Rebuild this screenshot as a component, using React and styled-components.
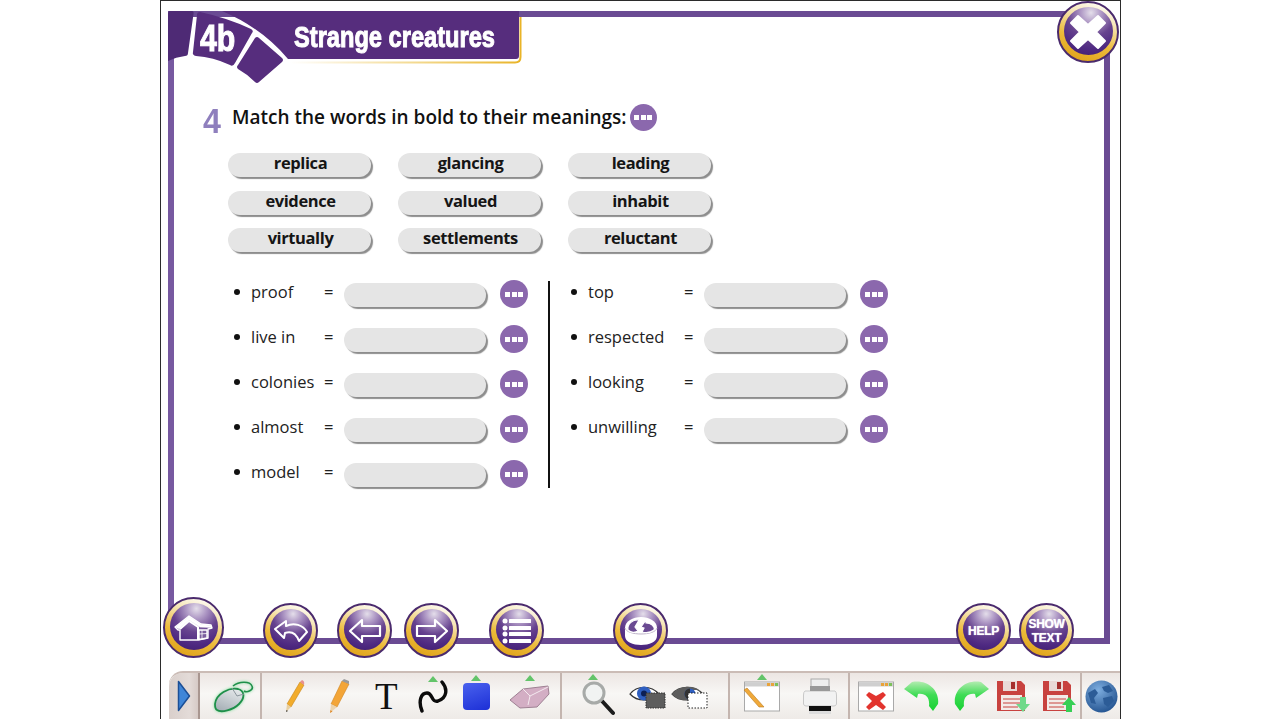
import React from 'react';
import styled, { createGlobalStyle } from 'styled-components';

const GlobalStyle = createGlobalStyle`
	html, body {
		margin: 0;
		padding: 0;
		background: #fff;
		overflow: hidden;
	}
	body {
		font-family: 'Open Sans', 'Liberation Sans', sans-serif;
	}
`;

const Stage = styled.div`
	position: relative;
	box-sizing: border-box;
	width: 961px;
	height: 719px;
	margin-left: 160px;
	border: 1px solid #2b2b2b;
	border-bottom: none;
	background: #fff;
	overflow: hidden;
`;

const Frame = styled.main`
	box-sizing: border-box;
	width: 942px;
	height: 633px;
	margin: 10px 0 0 7px;
	padding: 85px 0 0 29px;
	border: 6px solid #6a4b93;
	border-left-color: #7759a0;
`;

const BannerWrap = styled.header`
	position: absolute;
	left: 7px;
	top: 10px;
	width: 356px;
	height: 76px;

	svg {
		display: block;
	}
`;

const Lesson = styled.span`
	position: absolute;
	left: 32px;
	top: 6px;
	font: bold 37px/44px 'Liberation Sans', sans-serif;
	color: #fff;
	transform: scaleX(0.82);
	transform-origin: left center;
	-webkit-text-stroke: 1px #fff;
`;

const Title = styled.h1`
	position: absolute;
	left: 126px;
	top: 8px;
	margin: 0;
	font: bold 29px/36px 'Liberation Sans', sans-serif;
	color: #fff;
	white-space: nowrap;
	transform: scaleX(0.815);
	transform-origin: left center;
	-webkit-text-stroke: 1px #fff;
`;

const Heading = styled.div`
	display: flex;
	align-items: center;
	height: 30px;
`;

const Numeral = styled.span`
	width: 29px;
	font: bold 35px/30px 'Liberation Sans', sans-serif;
	color: #8f7fbd;
	transform: scaleX(0.92);
	transform-origin: left center;
	margin-top: 8px;
`;

const Prompt = styled.h2`
	margin: 0 3px 0 0;
	font-size: 19px;
	font-weight: 600;
	color: #111;
	white-space: nowrap;
`;

const ChipGrid = styled.div`
	display: grid;
	grid-template-columns: repeat(3, 143px);
	grid-auto-rows: 24px;
	column-gap: 27px;
	row-gap: 13.5px;
	margin: 21px 0 0 25px;
`;

const Chip = styled.div`
	display: flex;
	align-items: center;
	justify-content: center;
	height: 24px;
	padding: 0 0 5px 2px;
	box-sizing: border-box;
	border-radius: 12px;
	background: #e5e5e5;
	box-shadow: 2px 2px 1px #8d8d8d;
	font-size: 16.5px;
	font-weight: 700;
	letter-spacing: -0.4px;
	color: #151515;
`;

const Columns = styled.div`
	display: flex;
	margin: 29px 0 0 30px;
`;

const Column = styled.div`
	display: flex;
	flex-direction: column;
	gap: 21px;
	box-sizing: border-box;
	width: ${(p) => p.$width}px;
	height: 207px;
	padding: 2px 0 0 ${(p) => p.$inset}px;
`;

const Divider = styled.div`
	width: 2px;
	height: 207px;
	background: #111;
`;

const Row = styled.div`
	display: grid;
	grid-template-columns: 18px ${(p) => p.$label}px 20px 142px 42px;
	grid-template-rows: 24px;
	align-items: center;
	height: 24px;
	font-size: 16.5px;
	color: #222;
`;

const RowText = styled.span`
	padding-bottom: 7px;
`;

const Bullet = styled.span`
	width: 6px;
	height: 6px;
	margin: 0 0 6px 1px;
	border-radius: 50%;
	background: #111;
`;

const Field = styled.div`
	height: 24px;
	border-radius: 12px;
	background: #e5e5e5;
	box-shadow: 2px 2px 1px #8d8d8d;
`;

const Dots = styled.span`
	display: flex;
	flex: none;
	align-items: center;
	justify-content: center;
	gap: 1.5px;
	width: ${(p) => p.$size}px;
	height: ${(p) => p.$size}px;
	border-radius: 50%;
	background: #8b68ad;
	margin-left: ${(p) => p.$offset || 0}px;
	margin-bottom: ${(p) => p.$lift || 0}px;

	i {
		width: 5px;
		height: 5px;
		background: #fff;
	}
`;

const NavRow = styled.nav`
	position: absolute;
	left: 2px;
	top: 596px;
	display: flex;
	align-items: flex-end;
`;

const Round = styled.button`
	position: relative;
	flex: none;
	box-sizing: border-box;
	width: ${(p) => p.$size}px;
	height: ${(p) => p.$size}px;
	margin: 0 0 0 ${(p) => p.$ml || 0}px;
	padding: 0;
	border: 2px solid #4a2a6d;
	border-radius: 50%;
	background: linear-gradient(200deg, #fff 4%, #f6e6b6 30%, #edbb3a 62%, #dc9d12 100%);
	display: flex;
	align-items: center;
	justify-content: center;

	&::before {
		content: '';
		position: absolute;
		inset: 4px 4px 6px 5px;
		border-radius: 50%;
		background: radial-gradient(circle at 55% 12%, #e4deea 0, #b09ac6 20%, #67438f 48%, #4f2a82 72%, #3b1a6b 100%);
	}

	svg {
		position: relative;
	}
`;

const RoundText = styled.span`
	position: relative;
	font: bold ${(p) => p.$size}px/${(p) => p.$line}px 'Liberation Sans', sans-serif;
	color: #fff;
	text-align: center;
	letter-spacing: -0.3px;
	text-shadow: 0 0 1px #fff;
`;

const CloseSpot = styled.div`
	position: absolute;
	left: 896px;
	top: 0;
`;

const Toolbar = styled.footer`
	display: flex;
	box-sizing: border-box;
	width: 951px;
	height: 48px;
	margin: 27px 0 0 8px;
	border-top: 2px solid #cbbcb6;
	border-radius: 14px 0 0 0;
	background: linear-gradient(180deg, #ece6e3 0%, #f8f7f5 45%, #eeeae7 100%);
`;

const Section = styled.div`
	display: flex;
	flex: none;
	align-items: center;
	box-sizing: border-box;
	width: ${(p) => p.$width}px;
	height: 46px;
	border-right: 2px solid #c4b5af;
	background: ${(p) => p.$shade ? 'linear-gradient(90deg, #d9cfcb, #e3dbd8 70%, #d6cac6)' : 'none'};
	border-radius: ${(p) => p.$shade ? '14px 0 0 0' : '0'};
	border-right-color: ${(p) => p.$shade ? '#a89690' : '#c4b5af'};

	&:last-child {
		border-right: none;
	}
`;

const Tool = styled.div`
	position: relative;
	flex: none;
	display: flex;
	align-items: center;
	justify-content: center;
	margin-left: ${(p) => p.$ml || 0}px;
	margin-top: ${(p) => p.$mt || 0}px;
`;

const Marker = styled.span`
	position: absolute;
	left: ${(p) => p.$left}px;
	top: ${(p) => p.$top}px;
	width: 0;
	height: 0;
	border-left: 5px solid transparent;
	border-right: 5px solid transparent;
	border-bottom: 6px solid #63c46a;
`;

const SerifT = styled.span`
	font: 400 37px/37px 'Liberation Serif', serif;
	color: #111;
`;

const HomeIcon = () => (
	<svg width="39" height="26" viewBox="0 0 39 26" fill="none" stroke="#fff" strokeLinejoin="round">
		<path d="M1 12 L15 1 L27 9 L37 10 L38 13 L34 14 L34 23 L24 25 L6 25 L6 15 L4 15 Z" strokeWidth="1.4" />
		<path d="M6 14 L15 6 L24 12 L24 25" strokeWidth="2" />
		<path d="M1.5 12 L15 1.5 L27 9.5 L37 10.5 L37.5 12.5 L26 12 L15 5 L5 14 Z" fill="#fff" strokeWidth="0.6" />
		<path d="M25 15 H33 V23 L25 24.5 Z" fill="#7a5d9d" strokeWidth="1.4" />
		<path d="M28 15 V24 M25 19 L33 18.5" strokeWidth="0.8" />
	</svg>
);

const BackIcon = () => (
	<svg width="34" height="24" viewBox="0 0 34 24" fill="none" stroke="#fff" strokeWidth="2" strokeLinejoin="round">
		<path d="M12 2 L1 10 L10 19 L11 14 C17 12 22 14 25 22 L33 13 C29 6 20 3 12 7 Z" />
	</svg>
);

const ArrowIcon = ({ flip }) => (
	<svg width="34" height="26" viewBox="0 0 34 26" fill="none" stroke="#fff" strokeWidth="2.2" strokeLinejoin="round" style={flip ? { transform: 'scaleX(-1)' } : undefined}>
		<path d="M14 2 L2 13 L14 24 L14 18 L32 18 L32 8 L14 8 Z" />
	</svg>
);

const ListIcon = () => (
	<svg width="30" height="26" viewBox="0 0 30 26" fill="#fff">
		{[3, 10, 16, 23].map((y) => (
			<g key={y}>
				<circle cx="3" cy={y} r="2.5" />
				<rect x="7" y={y - 2} width="22" height="4" rx="0.5" />
			</g>
		))}
	</svg>
);

const DiscIcon = () => (
	<svg width="34" height="30" viewBox="0 0 34 30">
		<path d="M1 12 C1 5 9 1 17 1 C25 1 33 5 33 12 V20 C33 26 25 29 17 29 C9 29 1 26 1 20 Z" fill="#fff" />
		<path d="M1 12 C3 20 31 20 33 12" fill="none" stroke="#bdb3c8" strokeWidth="1" />
		<path d="M4 14 C3 8 9 3 15 4 L11 11 L14 15 C10 17 6 16 4 14 Z" fill="#6a4a92" stroke="#fff" strokeWidth="1.2" />
		<path d="M17 11 L22 4 L22 7 C27 7 31 10 30 14 C26 17 22 17 18 16 L20 12 Z" fill="#6a4a92" stroke="#fff" strokeWidth="1.2" />
	</svg>
);

const CloseIcon = () => (
	<svg width="38" height="36" viewBox="0 0 38 36">
		<path d="M9 2 L19 11 L29 2 L36 9 L27 18 L36 27 L29 34 L19 25 L9 34 L2 27 L11 18 L2 9 Z" fill="#fff" stroke="#fff" strokeWidth="2" strokeLinejoin="round" />
	</svg>
);

const PlayTab = () => (
	<svg width="14" height="32" viewBox="0 0 14 32">
		<path d="M1.5 1.5 L12.5 16 L1.5 30.5 Z" fill="#3f86d8" stroke="#1c4f96" strokeWidth="1.5" strokeLinejoin="round" />
	</svg>
);

const MouseIcon = () => (
	<svg width="42" height="33" viewBox="0 0 42 33" fill="none" style={{ filter: 'drop-shadow(0 0 1.5px #7fdc98)' }}>
		<defs>
			<linearGradient id="mouseBody" x1="0.7" y1="0" x2="0.2" y2="1">
				<stop offset="0" stopColor="#e4e8ea" />
				<stop offset="1" stopColor="#a5aeb5" />
			</linearGradient>
		</defs>
		<path d="M20 6 C26 1 37 1 39 6 C41 10 34 13 31 11" stroke="#1e8f4a" strokeWidth="1.6" />
		<path d="M2 24 C3 14 16 7 25 9 C32 11 32 18 26 24 C20 30 8 33 4 30 C2 29 2 27 2 24 Z" fill="url(#mouseBody)" stroke="#1e8f4a" strokeWidth="1.8" />
		<path d="M19 8 L24 16 L31 14" stroke="#8b959c" strokeWidth="1" />
	</svg>
);

const PencilThin = () => (
	<svg width="20" height="33" viewBox="0 0 20 33">
		<path d="M15 2 L19 5 L6 27 L2 24 Z" fill="#f2ac2c" stroke="#c8841a" strokeWidth="0.6" />
		<path d="M15 2 L17 0 Q20 1 19 5 Z" fill="#e8908f" />
		<path d="M2 24 L6 27 L1 32 Z" fill="#e8cfa0" />
		<path d="M1.5 30 L3 31 L1 32 Z" fill="#333" />
	</svg>
);

const PencilFat = () => (
	<svg width="22" height="35" viewBox="0 0 22 35">
		<path d="M14 2 L21 5 L9 28 L3 25 Z" fill="#f3a537" stroke="#cf8422" strokeWidth="0.6" />
		<path d="M14 2 L16 0 L21 2 L21 5 Z" fill="#9a9a9a" />
		<path d="M3 25 L9 28 L2 34 Z" fill="#ecd3ac" />
		<path d="M2.5 31 L4.5 32.5 L2 34 Z" fill="#e0892a" />
	</svg>
);

const Squiggle = () => (
	<svg width="32" height="34" viewBox="0 0 32 34" fill="none">
		<path d="M4 32 C0 22 3 14 9 14 C15 14 13 24 20 22 C29 19 30 10 24 3" stroke="#0b0b0b" strokeWidth="3.4" strokeLinecap="round" />
	</svg>
);

const Square = styled.span`
	display: block;
	width: 27px;
	height: 27px;
	border-radius: 4px;
	background: linear-gradient(160deg, #4a62ee, #1c2fd6);
`;

const Eraser = () => (
	<svg width="41" height="24" viewBox="0 0 41 24">
		<path d="M1 15 L14 4 L39 1 L40 9 L28 22 L11 23 Z" fill="#d3aec4" stroke="#96788b" strokeWidth="0.9" />
		<path d="M14 4 L21 11 L39 2 M21 11 L19 20" fill="none" stroke="#f4e9ef" strokeWidth="1" />
	</svg>
);

const Magnifier = () => (
	<svg width="33" height="35" viewBox="0 0 33 35" fill="none">
		<path d="M20 20 L31 32" stroke="#1c1c1c" strokeWidth="4" strokeLinecap="round" />
		<circle cx="12" cy="12" r="10" fill="#f1f3f2" stroke="#a7aaa8" strokeWidth="3" />
	</svg>
);

const EyeShow = () => (
	<svg width="37" height="25" viewBox="0 0 37 25">
		<path d="M1 10 C8 1 22 1 30 10 C22 18 8 18 1 10 Z" fill="#fff" stroke="#333" strokeWidth="1.2" />
		<circle cx="15" cy="9.5" r="7" fill="#2f5fc0" />
		<circle cx="15" cy="9.5" r="3" fill="#0c1f55" />
		<rect x="17" y="9" width="19" height="15" fill="#5d5d5d" stroke="#333" strokeDasharray="1.5 1" />
	</svg>
);

const EyeHide = () => (
	<svg width="37" height="25" viewBox="0 0 37 25">
		<path d="M1 10 C8 1 24 1 32 10 C24 18 8 18 1 10 Z" fill="#fff" stroke="#444" strokeWidth="1.2" />
		<path d="M1 10 C8 1 24 1 28 6 L18 6 L18 16 C10 17 6 15 1 10 Z" fill="#5d5d5d" />
		<circle cx="19" cy="10" r="5.5" fill="#2f5fc0" />
		<path d="M19 4.5 A5.5 5.5 0 0 0 19 15.5 Z" fill="#333" />
		<rect x="17" y="9" width="19" height="15" fill="#fff" stroke="#222" strokeDasharray="1.5 1.5" />
	</svg>
);

const WindowBase = ({ children }) => (
	<svg width="38" height="31" viewBox="0 0 38 31">
		<rect x="1.5" y="1" width="35" height="29" fill="#fff" stroke="#a9a9a9" />
		<rect x="2" y="1.5" width="34" height="4" fill="#cfcfcf" />
		<rect x="24" y="2" width="3" height="3" fill="#e8a33a" />
		<rect x="28" y="2" width="3" height="3" fill="#e8a33a" />
		<rect x="32" y="2" width="3" height="3" fill="#7cc25b" />
		{children}
	</svg>
);

const Printer = () => (
	<svg width="34" height="37" viewBox="0 0 34 37">
		<rect x="8" y="1" width="18" height="12" fill="#eee" stroke="#aaa" />
		<path d="M2 13 H32 Q33.5 14 33.5 17 V26 Q33 28 31 28 H3 Q1 28 0.5 26 V17 Q0.5 14 2 13 Z" fill="#f2f2f2" stroke="#c8c8c8" />
		<rect x="7" y="8" width="20" height="5" fill="#999" />
		<rect x="6" y="28" width="22" height="5" fill="#111" />
		<rect x="6" y="33" width="22" height="3" fill="#ddd" />
	</svg>
);

const GreenTurn = ({ flip, id }) => (
	<svg width="37" height="32" viewBox="0 0 37 32" style={flip ? { transform: 'scaleX(-1)' } : undefined}>
		<defs>
			<linearGradient id={id} x1="0" y1="0" x2="0" y2="1">
				<stop offset="0" stopColor="#b2ecb0" />
				<stop offset="0.45" stopColor="#3fdc55" />
				<stop offset="1" stopColor="#18d032" />
			</linearGradient>
		</defs>
		<path d="M1 9 L9 2 C24 -1 37 10 35 24 L30 31 L26 26 C27 18 23 13 15 14 L14 18 Z" fill={`url(#${id})`} />
	</svg>
);

const Floppy = ({ up }) => (
	<svg width="35" height="33" viewBox="0 0 35 33">
		<path d="M1 1 H25 L29 5 V31 H1 Z" fill="#c8423f" />
		<rect x="7" y="1" width="14" height="10" fill="#e9d9d6" />
		<rect x="15" y="2" width="4" height="7" fill="#a5302e" />
		<rect x="5" y="15" width="21" height="15" fill="#f3ebe8" />
		<path d="M7 19 H24 M7 23 H24 M7 27 H22" stroke="#c8423f" />
		{up ? (
			<path d="M27 17 L34 25 L30 25 L30 32 L24 32 L24 25 L20 25 Z" fill="#37cf55" />
		) : (
			<path d="M24 17 H30 V24 H34 L27 32 L20 24 H24 Z" fill="#6fd98a" />
		)}
	</svg>
);

const Globe = () => (
	<svg width="33" height="33" viewBox="0 0 33 33">
		<defs>
			<radialGradient id="sea" cx="40%" cy="30%" r="75%">
				<stop offset="0" stopColor="#7eaee0" />
				<stop offset="1" stopColor="#22528f" />
			</radialGradient>
		</defs>
		<circle cx="16.5" cy="16.5" r="16" fill="url(#sea)" />
		<path d="M3 13 L10 9 L13 13 L9 18 L11 24 L6 23 Z M17 7 L24 5 L28 11 L23 13 L19 11 Z M18 18 L27 16 L29 21 L23 27 L19 24 Z" fill="#2c5c97" />
	</svg>
);

const Banner = () => (
	<BannerWrap>
		<svg width="356" height="76" viewBox="168 11 356 76">
			<defs>
				<linearGradient id="goldEdge" x1="0" x2="1" y1="0" y2="0">
					<stop offset="0" stopColor="#fff" />
					<stop offset="0.55" stopColor="#f3d98f" />
					<stop offset="1" stopColor="#e9b428" />
				</linearGradient>
			</defs>
			<path d="M290 62.5 H515 Q520.5 62.5 520.5 57 V17" fill="none" stroke="url(#goldEdge)" strokeWidth="2" />
			<path d="M222 11 H519 V56 Q519 59 516 59 H288 Q262 28 222 11 Z" fill="#562d7d" />
			<path d="M170 11 H192 Q194 11 193.5 14 L188 53 Q188 56 185 56 Q176 57 168 61 V13 Q168 11 170 11 Z" fill="#4e2a75" />
			<path d="M200 12 Q228 18 251 29 Q254 31 252 33 L235 63 Q233 67 230 65 Q213 57 196 56 Q192 55 193 52 L197 15 Q197 12 200 12 Z" fill="#562d7d" />
			<path d="M255 38 Q257 36 259 38 L282 58 Q284 60 282 62 L259 82 Q257 84 255 82 Q247 74 238 69 Q236 67 238 65 Z" fill="#562d7d" />
		</svg>
		<Lesson>4b</Lesson>
		<Title>Strange creatures</Title>
	</BannerWrap>
);

const pips = (
	<>
		<i />
		<i />
		<i />
	</>
);

const MatchRow = ({ word, label }) => (
	<Row $label={label}>
		<Bullet />
		<RowText>{word}</RowText>
		<RowText>=</RowText>
		<Field />
		<Dots $size={28} $offset={14} $lift={2}>{pips}</Dots>
	</Row>
);

const words = ['replica', 'glancing', 'leading', 'evidence', 'valued', 'inhabit', 'virtually', 'settlements', 'reluctant'];
const leftWords = ['proof', 'live in', 'colonies', 'almost', 'model'];
const rightWords = ['top', 'respected', 'looking', 'unwilling'];

const App = () => {
	return (
		<>
			<GlobalStyle />
			<Stage>
				<Frame>
					<Heading>
						<Numeral>4</Numeral>
						<Prompt>Match the words in bold to their meanings:</Prompt>
						<Dots $size={27}>{pips}</Dots>
					</Heading>
					<ChipGrid>
						{words.map((w) => (
							<Chip key={w}>{w}</Chip>
						))}
					</ChipGrid>
					<Columns>
						<Column $width={315} $inset={0}>
							{leftWords.map((w) => (
								<MatchRow key={w} word={w} label={73} />
							))}
						</Column>
						<Divider />
						<Column $width={340} $inset={20}>
							{rightWords.map((w) => (
								<MatchRow key={w} word={w} label={96} />
							))}
						</Column>
					</Columns>
				</Frame>

				<Banner />

				<CloseSpot>
					<Round $size={62}><CloseIcon /></Round>
				</CloseSpot>

				<NavRow>
					<Round $size={61}><HomeIcon /></Round>
					<Round $size={55} $ml={39}><BackIcon /></Round>
					<Round $size={55} $ml={19}><ArrowIcon /></Round>
					<Round $size={55} $ml={12}><ArrowIcon flip /></Round>
					<Round $size={55} $ml={30}><ListIcon /></Round>
					<Round $size={55} $ml={69}><DiscIcon /></Round>
					<Round $size={55} $ml={288}><RoundText $size={12} $line={14}>HELP</RoundText></Round>
					<Round $size={55} $ml={8}><RoundText $size={12} $line={14}>SHOW<br />TEXT</RoundText></Round>
				</NavRow>

				<Toolbar>
					<Section $width={31} $shade>
						<Tool $ml={8}><PlayTab /></Tool>
					</Section>
					<Section $width={62}>
						<Tool $ml={13}><MouseIcon /></Tool>
					</Section>
					<Section $width={300}>
						<Tool $ml={23}><PencilThin /></Tool>
						<Tool $ml={23}><PencilFat /></Tool>
						<Tool $ml={25}><SerifT>T</SerifT></Tool>
						<Tool $ml={20}>
							<Squiggle />
							<Marker $left={10} $top={-3} />
						</Tool>
						<Tool $ml={13}>
							<Square />
							<Marker $left={8} $top={-8} />
						</Tool>
						<Tool $ml={19} $mt={2}>
							<Eraser />
							<Marker $left={16} $top={-10} />
						</Tool>
					</Section>
					<Section $width={168}>
						<Tool $ml={20} $mt={4}>
							<Magnifier />
							<Marker $left={6} $top={-7} />
						</Tool>
						<Tool $ml={14}><EyeShow /></Tool>
						<Tool $ml={5}><EyeHide /></Tool>
					</Section>
					<Section $width={120}>
						<Tool $ml={13}>
							<WindowBase>
								<path d="M1 9 L4 7 L21 26 L16 26 Z" fill="#f0a93a" stroke="#b97a1e" strokeWidth="0.6" />
							</WindowBase>
							<Marker $left={14} $top={-7} />
						</Tool>
						<Tool $ml={22}><Printer /></Tool>
					</Section>
					<Section $width={232}>
						<Tool $ml={7}>
							<WindowBase>
								<path d="M12 11 L19 15 L26 11 L29 14 L23 20 L29 26 L26 29 L19 24 L12 29 L9 26 L15 20 L9 14 Z" fill="#e2342e" />
							</WindowBase>
						</Tool>
						<Tool $ml={8}><GreenTurn id="turnBack" /></Tool>
						<Tool $ml={13}><GreenTurn flip id="turnOn" /></Tool>
						<Tool $ml={6}><Floppy /></Tool>
						<Tool $ml={11}><Floppy up /></Tool>
					</Section>
					<Section $width={38}>
						<Tool $ml={3}><Globe /></Tool>
					</Section>
				</Toolbar>
			</Stage>
		</>
	);
};

export default App;
